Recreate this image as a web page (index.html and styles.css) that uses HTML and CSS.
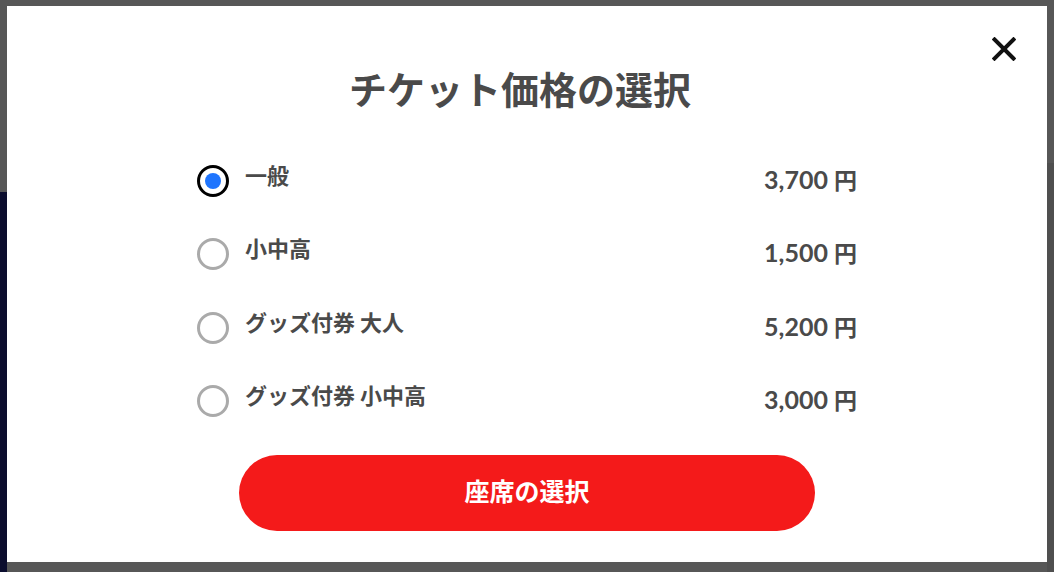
FILE: index.html
```html
<!DOCTYPE html>
<html lang="ja">
<head>
  <meta charset="UTF-8">
  <title>チケット価格の選択</title>
  <link rel="stylesheet" href="styles.css">
</head>
<body>

  <div class="modal">
    <button type="button" class="close" aria-label="閉じる">
      <svg width="24" height="24" viewBox="0 0 24 24">
        <path d="M2.5 2.5 L21.5 21.5 M21.5 2.5 L2.5 21.5" stroke="#111" stroke-width="4" stroke-linecap="square" fill="none"/>
      </svg>
    </button>

    <h2 class="title">チケット価格の選択</h2>

    <ul class="options">
      <li class="option">
        <span class="radio checked"></span>
        <span class="label">一般</span>
        <span class="price">3,700 <span class="yen">円</span></span>
      </li>
      <li class="option">
        <span class="radio"></span>
        <span class="label">小中高</span>
        <span class="price">1,500 <span class="yen">円</span></span>
      </li>
      <li class="option">
        <span class="radio"></span>
        <span class="label">グッズ付券 大人</span>
        <span class="price">5,200 <span class="yen">円</span></span>
      </li>
      <li class="option">
        <span class="radio"></span>
        <span class="label">グッズ付券 小中高</span>
        <span class="price">3,000 <span class="yen">円</span></span>
      </li>
    </ul>

    <button type="button" class="submit">座席の選択</button>
  </div>

</body>
</html>
```

FILE: styles.css
```css
html, body {
  margin: 0;
  height: 572px;
  overflow: hidden;
}

body {
  font-family: Lato, "Noto Sans CJK JP", sans-serif;
  color: #4a4a4a;
  background:
    linear-gradient(#0b0d2e, #0b0d2e) 0 192px / 7px 380px no-repeat,
    linear-gradient(#4f4f4f, #4f4f4f) 1047px 163px / 7px 410px no-repeat,
    #575757;
}

.modal {
  position: relative;
  box-sizing: border-box;
  width: 1040px;
  height: 556px;
  margin: 6px 0 0 7px;
  padding-top: 59px;
  background: #fff;
  display: flex;
  flex-direction: column;
  align-items: center;
}

.close {
  position: absolute;
  top: 31px;
  right: 31px;
  width: 24px;
  height: 24px;
  padding: 0;
  border: none;
  background: none;
  cursor: pointer;
}

.close svg {
  display: block;
}

.title {
  margin: 0 14px 0 0;
  font-family: "Noto Sans CJK JP", sans-serif;
  font-size: 38px;
  line-height: 46px;
  font-weight: 700;
}

.options {
  list-style: none;
  margin: 33px 0 0;
  padding: 0;
  width: 660px;
}

.option {
  height: 73.5px;
  display: flex;
  align-items: center;
}

.radio {
  box-sizing: border-box;
  width: 32px;
  height: 32px;
  border: 3px solid #aaa;
  border-radius: 50%;
  margin-right: 16px;
  display: flex;
  align-items: center;
  justify-content: center;
  flex: none;
}

.radio.checked {
  border-color: #000;
}

.radio.checked::after {
  content: "";
  width: 16px;
  height: 16px;
  border-radius: 50%;
  background: #1f75fe;
}

.label {
  flex: 1;
  font-family: "Noto Sans CJK JP", sans-serif;
  font-size: 22px;
  font-weight: 700;
  margin-bottom: 14px;
}

.price {
  font-size: 25px;
  font-weight: 700;
  margin-bottom: 4px;
}

.yen {
  font-family: "Noto Sans CJK JP", sans-serif;
  font-size: 23px;
}

.submit {
  margin-top: 17px;
  width: 576px;
  height: 76px;
  padding: 0 0 7px;
  border: none;
  border-radius: 38px;
  background: #f41a1a;
  color: #fff;
  font-family: "Noto Sans CJK JP", sans-serif;
  font-size: 25px;
  font-weight: 700;
  cursor: pointer;
}
```
